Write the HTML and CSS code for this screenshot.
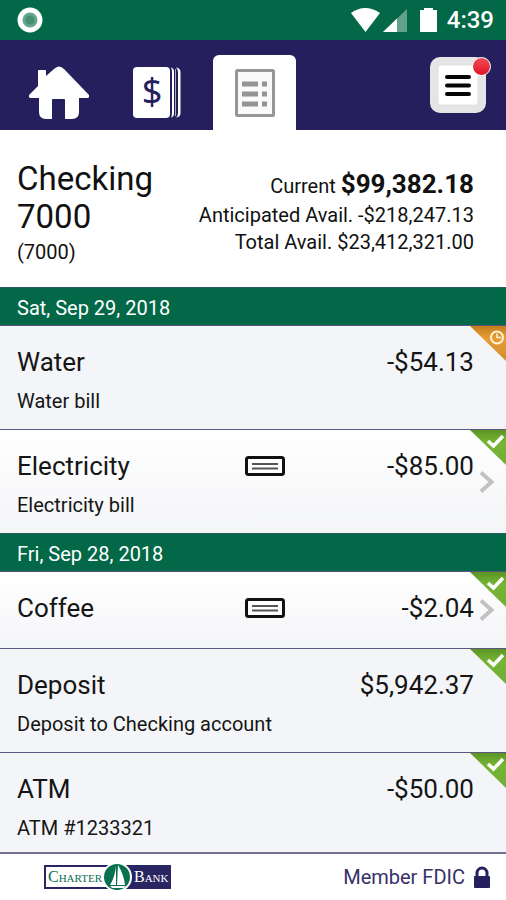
FILE: index.html
```html
<!DOCTYPE html>
<html lang="en">
<head>
<meta charset="utf-8">
<meta name="viewport" content="width=device-width, initial-scale=1">
<title>Checking 7000</title>
<link rel="stylesheet" href="styles.css">
</head>
<body>
<svg class="defs" aria-hidden="true">
  <defs>
    <linearGradient id="green" x1="0" y1="0" x2="0" y2="1"><stop offset="0" stop-color="#5c9424"/><stop offset=".35" stop-color="#76b535"/><stop offset="1" stop-color="#72ad35"/></linearGradient>
    <linearGradient id="orange" x1="0" y1="0" x2="0" y2="1"><stop offset="0" stop-color="#c47d1c"/><stop offset=".35" stop-color="#e89c33"/><stop offset="1" stop-color="#d28c30"/></linearGradient>
    <symbol id="cleared" viewBox="0 0 36 35"><path d="M0 0H36V35Z" fill="url(#green)"/><path d="M18 11l5.500 5L33 6" fill="none" stroke="#fff" stroke-width="3.500"/></symbol>
    <symbol id="pending" viewBox="0 0 36 35"><path d="M0 0H36V35Z" fill="url(#orange)"/><circle cx="27" cy="11.500" r="6" fill="none" stroke="#fff3da" stroke-width="2"/><path d="M27 7.500v4h4" fill="none" stroke="#fff3da" stroke-width="1.500"/></symbol>
    <symbol id="check" viewBox="0 0 40 20"><rect x="1.500" y="1.500" width="37" height="17" rx="2" fill="#fff" stroke="#111" stroke-width="3"/><path d="M7 8H33M7 12.500H33" stroke="#555" stroke-width="1.800"/></symbol>
    <symbol id="chevron" viewBox="0 0 16 24"><path d="M2 2.500L12.500 12L2 21.500" fill="none" stroke="#c2c2c4" stroke-width="4"/></symbol>
  </defs>
</svg>
<div class="app">
  <header class="status">
    <svg class="record" viewBox="0 0 26 26" aria-hidden="true"><circle cx="13" cy="13" r="12.500" fill="#fff"/><circle cx="13" cy="13" r="7.500" fill="#65a58e"/><circle cx="13" cy="13" r="4.500" fill="#439073"/></svg>
    <div class="signals">
      <svg class="radio" viewBox="0 0 90 26" aria-hidden="true">
        <path d="M2 6Q16-4 31 6L16.500 25Z" fill="#fff"/>
        <path d="M34 25L58 2V25Z" fill="#62a18a"/><path d="M34 25L48 11.500V25Z" fill="#fff"/>
        <path d="M71 3h4V1h9v2h4V25H71Z" fill="#fff"/>
      </svg>
      <time>4:39</time>
    </div>
  </header>
  <nav class="tabs">
    <a class="tab" href="#home" aria-label="Home"><svg class="house" viewBox="0 0 60 54"><path d="M0 29L9 20V5Q9 4 10 4H16Q17 4 17 5V10L25 3Q30-2 35 3L60 29Q61 32 58 32H50V46Q50 53 43 53H36V34Q36 33 35 33H24Q23 33 23 34V53H17Q10 53 10 46V32H2Q-1 32 0 29Z" fill="#fff"/></svg></a>
    <a class="tab" href="#accounts" aria-label="Accounts"><svg class="bills" viewBox="0 0 50 53"><rect x="1" y="1" width="37" height="51" rx="4" fill="#fff"/><path d="M39 1.500Q42 2 42 6V47Q42 51 39 51.500Q40 50 40 47V6Q40 3 39 1.500ZM44 1.500Q48.500 2 48.500 6V47Q48.500 51 44 51.500Q46 50 46 47V6Q46 3 44 1.500Z" fill="#fff"/><path d="M43.500 3V50" stroke="#aaa8c3" stroke-width="1"/><text x="20" y="38" text-anchor="middle" class="dollar">$</text></svg></a>
    <a class="tab active" href="#register" aria-label="Register" aria-current="page"><svg class="ledger" viewBox="0 0 40 48"><rect x="1.500" y="1.500" width="37" height="45" rx="1" fill="#fafafa" stroke="#979797" stroke-width="3"/><path d="M7 15H23M7 25H23M7 35H23" stroke="#949494" stroke-width="5"/><path d="M27 15h5M27 25h5M27 35h5" stroke="#949494" stroke-width="5"/></svg></a>
    <button class="menu" type="button" aria-label="Menu"><svg viewBox="0 0 28 24"><path d="M3 4H25M3 12.500H25M3 21H25" stroke="#050505" stroke-width="4" stroke-linecap="round"/></svg><span class="alert"></span></button>
  </nav>
  <section class="account">
    <div><h1>Checking 7000</h1><p class="number">(7000)</p></div>
    <div class="balances">
      <p class="current">Current <strong>$99,382.18</strong></p>
      <p>Anticipated Avail. -$218,247.13</p>
      <p>Total Avail. $23,412,321.00</p>
    </div>
  </section>
  <main class="transactions">
    <h2>Sat, Sep 29, 2018</h2>
    <article class="row">
      <h3>Water</h3><span></span><span class="amount">-$54.13</span>
      <p>Water bill</p>
      <svg class="corner" role="img" aria-label="Pending"><use href="#pending"/></svg>
    </article>
    <article class="row linked">
      <h3>Electricity</h3><svg class="check" aria-hidden="true"><use href="#check"/></svg><span class="amount">-$85.00</span>
      <p>Electricity bill</p>
      <svg class="corner" role="img" aria-label="Cleared"><use href="#cleared"/></svg>
      <svg class="chevron" aria-hidden="true"><use href="#chevron"/></svg>
    </article>
    <h2>Fri, Sep 28, 2018</h2>
    <article class="row linked short">
      <h3>Coffee</h3><svg class="check" aria-hidden="true"><use href="#check"/></svg><span class="amount">-$2.04</span>
      <svg class="corner" role="img" aria-label="Cleared"><use href="#cleared"/></svg>
      <svg class="chevron" aria-hidden="true"><use href="#chevron"/></svg>
    </article>
    <article class="row">
      <h3>Deposit</h3><span></span><span class="amount">$5,942.37</span>
      <p>Deposit to Checking account</p>
      <svg class="corner" role="img" aria-label="Cleared"><use href="#cleared"/></svg>
    </article>
    <article class="row">
      <h3>ATM</h3><span></span><span class="amount">-$50.00</span>
      <p>ATM #1233321</p>
      <svg class="corner" role="img" aria-label="Cleared"><use href="#cleared"/></svg>
    </article>
  </main>
  <footer>
    <svg class="logo" viewBox="0 0 127 28" role="img" aria-label="Charter Bank">
      <rect x="1" y="3" width="125" height="22" fill="#fff" stroke="#292561" stroke-width="2"/><path d="M73 2H127V26H73Z" fill="#292561"/>
      <circle cx="73" cy="14" r="15" fill="#fff"/><circle cx="73" cy="14" r="13" fill="#08704d"/>
      <path d="M72 3Q71 14 66 22H72ZM74 2Q80 12 81 22H73ZM66 23H82L80 25H68Z" fill="#fff"/>
      <text class="brand charter" x="4" y="19"><tspan class="cap">C</tspan>HARTER</text>
      <text class="brand bank" x="90" y="19"><tspan class="cap">B</tspan>ANK</text>
    </svg>
    <p class="member">Member FDIC
      <svg viewBox="0 0 18 22" aria-hidden="true"><path d="M4 11V7a5 5 0 0 1 10 0v4" fill="none" stroke="#26215e" stroke-width="3"/><rect x="1" y="10" width="16" height="12" rx="1" fill="#26215e"/></svg>
    </p>
  </footer>
</div>
</body>
</html>
```

FILE: styles.css
```css
* { box-sizing: border-box; }
body { margin: 0; background: #fff; color: #151515; font-family: Roboto, "Liberation Sans", sans-serif; font-size: 20px; line-height: 24px; }
h1, h2, h3, p { margin: 0; font-weight: 400; }
svg { display: block; }
.defs { position: absolute; width: 0; height: 0; }
.app { display: flex; flex-direction: column; height: 100vh; }

.status { flex: none; display: flex; align-items: center; justify-content: space-between; height: 40px; padding: 0 12px 0 17px; background: #026848; color: #fff; }
.record { width: 26px; height: 26px; }
.signals { display: flex; align-items: center; gap: 8px; font-size: 24px; font-weight: 500; }
.radio { width: 90px; height: 26px; }

.tabs { flex: none; display: flex; align-items: flex-end; height: 90px; padding: 0 20px 0 17px; background: #25205d; }
.tab { display: flex; align-items: center; justify-content: center; width: 83px; height: 75px; margin-right: 15px; border-radius: 6px 6px 0 0; }
.tab.active { background: #fff; }
.house { width: 60px; height: 54px; }
.bills { width: 50px; height: 53px; }
.dollar { font-family: "Noto Sans", sans-serif; font-size: 36px; fill: #25205d; }
.ledger { width: 40px; height: 48px; }
.menu { position: relative; display: flex; align-items: center; justify-content: center; width: 56px; height: 56px; margin: 0 0 17px auto; padding: 0; border: 7px solid #e5e5e8; border-radius: 10px; background: #fff; box-shadow: inset 0 0 3px #aaa; }
.menu svg { flex: none; width: 28px; height: 24px; }
.alert { position: absolute; top: -7px; right: -12px; width: 19px; height: 19px; border: 1px solid #fff; border-radius: 50%; background: linear-gradient(#f04b55, #e11428); }

.account { flex: none; display: flex; justify-content: space-between; padding: 30px 32px 21px 17px; color: #111; }
h1 { width: min-content; font-size: 33px; line-height: 38px; }
.number { padding-top: 2px; line-height: 28px; }
.balances { padding-top: 8px; line-height: 27px; text-align: right; white-space: nowrap; }
.current { line-height: 32px; }
.current strong { font-size: 26px; }

.transactions { flex: 1; min-height: 0; overflow-y: auto; scrollbar-width: none; }
h2 { height: 38px; padding: 2px 17px 0; border-top: 1px solid #285b60; background: #026848; color: #fff; font-size: 20px; line-height: 36px; }
.row { position: relative; display: grid; grid-template-columns: 11fr 40px 9fr; column-gap: 12px; row-gap: 11px; align-items: center; padding: 20px 32px 16px 17px; border-top: 1px solid #595780; background: #f4f5f8; }
.linked { background: linear-gradient(#fff, #f4f5f7); }
.short { padding-bottom: 24px; }
h3, .amount { font-size: 26px; line-height: 32px; }
.amount { text-align: right; }
.row p { grid-column: 1 / -1; }
.check { width: 40px; height: 20px; }
.corner { position: absolute; top: 0; right: 0; width: 36px; height: 35px; }
.chevron { position: absolute; top: 50%; right: 11px; width: 16px; height: 24px; margin-top: -12px; }

footer { flex: none; display: flex; align-items: center; justify-content: space-between; height: 48px; padding: 0 15px 0 44px; border-top: 2px solid #74728f; background: #fff; }
.logo { width: 127px; height: 28px; }
.brand { font-family: "Liberation Serif", serif; font-size: 11px; }
.cap { font-size: 16px; }
.charter { fill: #08704d; }
.bank { fill: #fff; }
.member { display: flex; align-items: center; gap: 8px; color: #353168; }
.member svg { width: 18px; height: 22px; }
```
